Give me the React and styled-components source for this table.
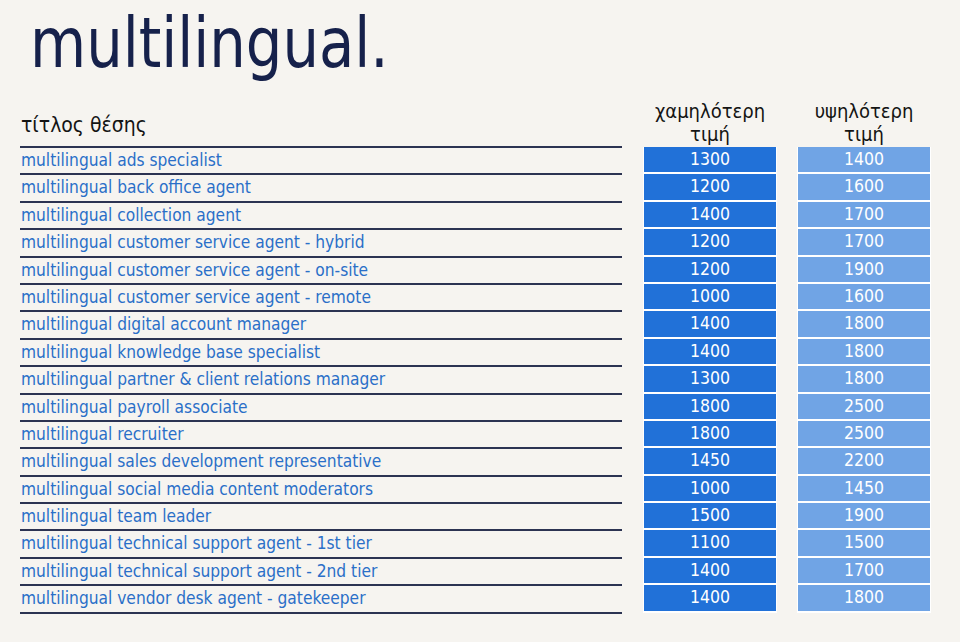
import React from "react";
import styled, { createGlobalStyle } from "styled-components";

const GlobalStyle = createGlobalStyle`
  html, body {
    margin: 0;
    padding: 0;
    background: #f6f4f0;
  }
  body {
    font-family: "DejaVu Sans Condensed", "DejaVu Sans", sans-serif;
    font-stretch: condensed;
  }
`;

const rows = [
  ["multilingual ads specialist", 1300, 1400],
  ["multilingual back office agent", 1200, 1600],
  ["multilingual collection agent", 1400, 1700],
  ["multilingual customer service agent - hybrid", 1200, 1700],
  ["multilingual customer service agent - on-site", 1200, 1900],
  ["multilingual customer service agent - remote", 1000, 1600],
  ["multilingual digital account manager", 1400, 1800],
  ["multilingual knowledge base specialist", 1400, 1800],
  ["multilingual partner & client relations manager", 1300, 1800],
  ["multilingual payroll associate", 1800, 2500],
  ["multilingual recruiter", 1800, 2500],
  ["multilingual sales development representative", 1450, 2200],
  ["multilingual social media content moderators", 1000, 1450],
  ["multilingual team leader", 1500, 1900],
  ["multilingual technical support agent - 1st tier", 1100, 1500],
  ["multilingual technical support agent - 2nd tier", 1400, 1700],
  ["multilingual vendor desk agent - gatekeeper", 1400, 1800],
];

const Page = styled.div`
  width: 960px;
  height: 642px;
  padding: 0 20px;
  box-sizing: border-box;
  overflow: hidden;
`;

const Title = styled.h1`
  margin: 0 0 22px 10px;
  padding-top: 8px;
  font-size: 70px;
  line-height: 70px;
  font-weight: normal;
  color: #16214b;
  transform: scaleX(0.915);
  transform-origin: left top;
  white-space: nowrap;
`;

const Table = styled.div`
  display: grid;
  grid-template-columns: 602px 132px 132px;
  grid-auto-rows: 27.4px;
  grid-template-rows: auto;
  column-gap: 22px;
`;

const NameHead = styled.div`
  align-self: end;
  font-size: 21px;
  line-height: 24px;
  color: #141414;
  padding: 0 0 9px 1px;
  border-bottom: 2px solid #2c3352;
`;

const PriceHead = styled.div`
  align-self: end;
  margin-bottom: 2px;
  font-size: 20px;
  line-height: 23px;
  text-align: center;
  color: #141414;
`;

const Name = styled.div`
  font-size: 17.2px;
  line-height: 25.4px;
  color: #2a6fc8;
  padding-left: 1px;
  border-bottom: 2px solid #2c3352;
  white-space: nowrap;
`;

const Price = styled.div`
  margin-top: -1px;
  height: 27.4px;
  box-sizing: border-box;
  border-bottom: 2px solid #ffffff;
  box-shadow: 1px 0 0 #ffffff, -1px 0 0 #ffffff;
  background: ${(p) => (p.$high ? "#70a4e5" : "#2171d8")};
  color: #ffffff;
  font-size: 17.5px;
  line-height: 25.4px;
  text-align: center;
`;

export default function App() {
  return (
    <Page>
      <GlobalStyle />
      <Title>multilingual.</Title>
      <Table>
        <NameHead>τίτλος θέσης</NameHead>
        <PriceHead>
          χαμηλότερη
          <br />
          τιμή
        </PriceHead>
        <PriceHead>
          υψηλότερη
          <br />
          τιμή
        </PriceHead>
        {rows.map(([name, low, high]) => (
          <React.Fragment key={name}>
            <Name>{name}</Name>
            <Price>{low}</Price>
            <Price $high>{high}</Price>
          </React.Fragment>
        ))}
      </Table>
    </Page>
  );
}
